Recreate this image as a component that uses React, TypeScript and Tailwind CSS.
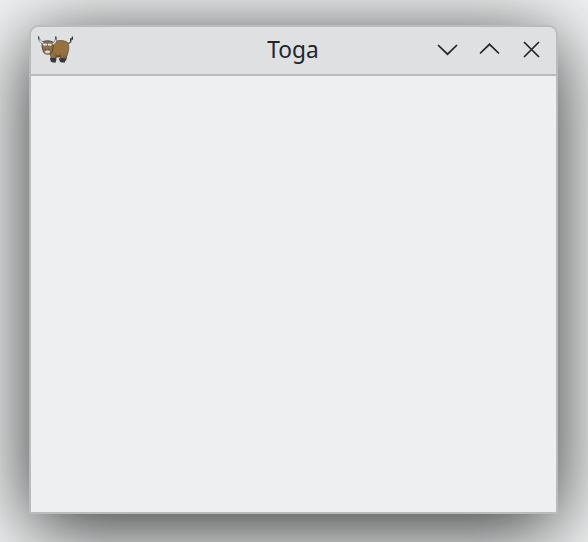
function OxIcon() {
  return (
    <svg className="mb-[2px] ml-px h-[35px] w-[35px] shrink-0" viewBox="0.500 0 35 35" fill="none" aria-hidden="true">
      <path d="M28.500 11.500c3.500.2 5-1 5-3" stroke="#454847" strokeWidth="1.300" />
      <path d="M33.200 9V7h1.700V4.500" stroke="#353c40" strokeWidth="1.300" />
      <path d="M14 20.500v8h4.500V25h5v3.500h4.800L30 20z" fill="#755a35" stroke="#454436" strokeWidth=".8" />
      <path d="M15.500 11C18.500 8 24.500 8 28.500 9.500c3.300 2 3.100 6.500 2.300 10-.8 3-2 5.300-3.500 7h-4l-.5-3-3.700-.2-1.300 3.200h-4L12 20.500z" fill="#98713e" stroke="#65502f" strokeWidth=".8" />
      <path d="M17.500 21v3.500M23 21l.6 4M27 22.500l-.8 3" stroke="#6b502f" strokeWidth=".7" />
      <path d="M12.500 26l.7 3.500 2 1h3.200v-4l-1.200-.8zM21.300 26.500l1 3 1.700 1h3.300l.8-4-3-.4z" fill="#34383a" />
      <path d="M4.800 9.800C7.500 8.500 13 8.500 15.300 10l.5 4.500-1.300 6c-2.200 2.300-6.700 2.100-8.500-.2L4.500 14.500z" fill="#98713e" stroke="#44413a" strokeWidth=".9" />
      <path d="M5.300 12C2.200 11 .8 8.300.9 4.500c1.200 3.200 2.200 4.300 5.200 5.500M14.500 11.700c2.700-1.800 3.600-4 3.700-7.200 1.900 3.500.6 7-2.500 8.200" fill="#eef0ef" stroke="#6d7475" strokeWidth=".8" />
      <path d="M1.200 7.500V4.500M18.300 7.500V4.500" stroke="#343a3c" strokeWidth="1" />
      <ellipse cx="7.600" cy="12.500" rx="2.300" ry="1.800" fill="#fff" stroke="#4d4f4c" strokeWidth=".6" />
      <ellipse cx="12.200" cy="12.500" rx="2.300" ry="1.800" fill="#fff" stroke="#4d4f4c" strokeWidth=".6" />
      <path d="M5.500 11.500h4M10.500 11.500h4" stroke="#85877f" strokeWidth=".8" />
      <path d="M7.800 13h.7M11.700 13h.7" stroke="#343735" strokeWidth=".8" />
      <path d="M6.800 19.700c1-2 4.500-2.400 6.400-.8l-.5 2c-1.500 1.400-4.300 1-5.200 0z" fill="#d9d8d1" stroke="#504d43" strokeWidth=".6" />
      <path d="M7.300 17.600l1.500-.5M11 17.100l1.300.6" stroke="#3d3730" strokeWidth=".8" />
    </svg>
  );
}

function ControlIcon({ path }: { path: string }) {
  return (
    <svg className="block h-6 w-6" viewBox="0 0 24 24" fill="none" stroke="#232629" strokeWidth="1.700">
      <path d={path} />
    </svg>
  );
}

const controls = [
  { label: "Minimize", path: "M2 8l9.500 9.200L21 8" },
  { label: "Maximize", path: "M2 16.500l9.500-9.200 9.500 9.200" },
  { label: "Close", path: "M4 5l15 15M19 5 4 20" },
];

export default function App() {
  return (
    <main className="h-[542px] w-[588px] overflow-hidden bg-[#f4f5f6] pt-[25px] pl-[29px]">
      <section className="flex h-[489px] w-[529px] flex-col overflow-hidden rounded-t-[10px] border-2 border-[#b9bbbc] bg-[#eeeff1] shadow-[0_14px_80px_rgba(15,19,17,0.88)]">
        <header className="grid h-[49px] shrink-0 grid-cols-[1fr_auto_1fr] items-center border-b-2 border-[#b9bbbc] bg-[#dee0e2] pr-[12px] pl-[6px]">
          <OxIcon />
          <h1 className="pb-[2px] pl-[5px] font-[family-name:'Noto_Sans',sans-serif] text-[22.700px] leading-[30px] font-normal text-[#232629]">Toga</h1>
          <div className="flex justify-end gap-[18px] pb-[3px]">
            {controls.map((control) => (
              <button key={control.label} aria-label={control.label}>
                <ControlIcon path={control.path} />
              </button>
            ))}
          </div>
        </header>
        <div className="flex-1 bg-[#eeeff1]" />
      </section>
    </main>
  );
}
